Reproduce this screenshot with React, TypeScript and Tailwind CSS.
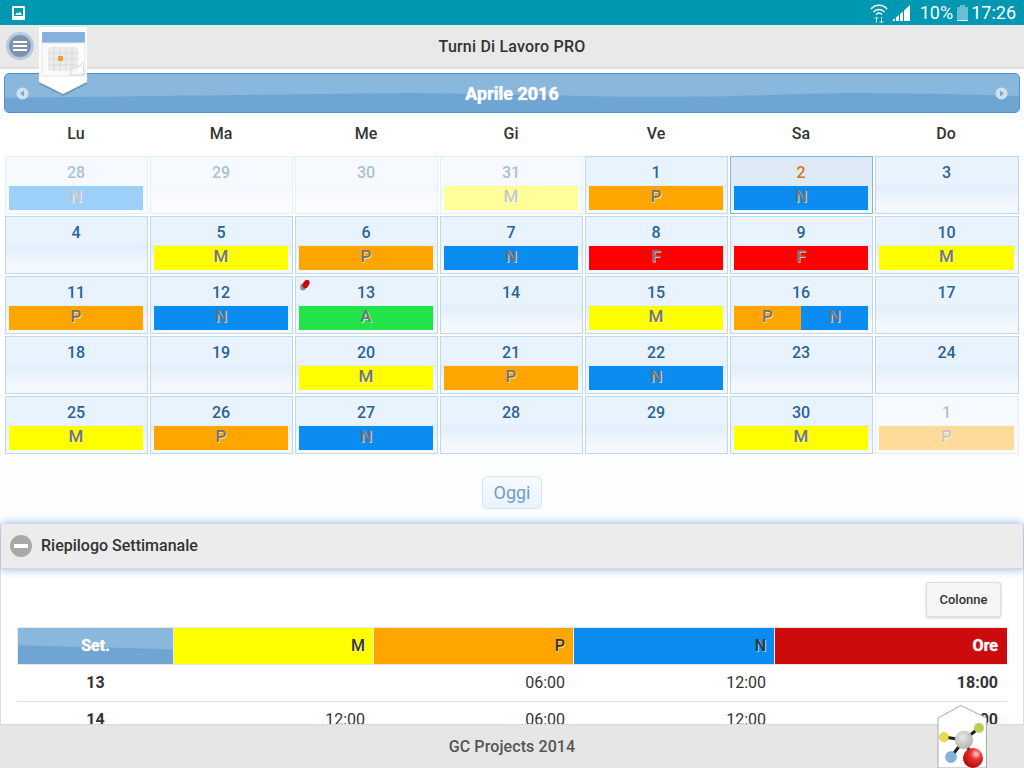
import { Fragment } from 'react';

type Day = { n: number; s?: string; off?: boolean; today?: boolean; pin?: boolean };

const shiftColor: Record<string, string> = {
  M: 'bg-[#ffff00]',
  P: 'bg-[#ffa500]',
  N: 'bg-[#0a8cf0]',
  F: 'bg-[#ff0000]',
  A: 'bg-[#22e34a]',
};

const weekdays = ['Lu', 'Ma', 'Me', 'Gi', 'Ve', 'Sa', 'Do'];

const days: Day[] = [
  { n: 28, s: 'N', off: true },
  { n: 29, off: true },
  { n: 30, off: true },
  { n: 31, s: 'M', off: true },
  { n: 1, s: 'P' },
  { n: 2, s: 'N', today: true },
  { n: 3 },
  { n: 4 },
  { n: 5, s: 'M' },
  { n: 6, s: 'P' },
  { n: 7, s: 'N' },
  { n: 8, s: 'F' },
  { n: 9, s: 'F' },
  { n: 10, s: 'M' },
  { n: 11, s: 'P' },
  { n: 12, s: 'N' },
  { n: 13, s: 'A', pin: true },
  { n: 14 },
  { n: 15, s: 'M' },
  { n: 16, s: 'PN' },
  { n: 17 },
  { n: 18 },
  { n: 19 },
  { n: 20, s: 'M' },
  { n: 21, s: 'P' },
  { n: 22, s: 'N' },
  { n: 23 },
  { n: 24 },
  { n: 25, s: 'M' },
  { n: 26, s: 'P' },
  { n: 27, s: 'N' },
  { n: 28 },
  { n: 29 },
  { n: 30, s: 'M' },
  { n: 1, s: 'P', off: true },
];

const rows = [
  ['13', '', '06:00', '12:00', '18:00'],
  ['14', '12:00', '06:00', '12:00', '30:00'],
];

const ShiftBlock = ({ label }: { label: string }) => (
  <div
    className={`flex flex-1 items-center justify-center pb-[5px] text-[17px] leading-[20px] font-medium text-[#727272] [text-shadow:1px_1px_0_rgba(255,255,255,0.7)] ${shiftColor[label]}`}
  >
    {label}
  </div>
);

const Wave = ({ d }: { d: string }) => (
  <svg
    className="absolute inset-0 h-full w-full"
    viewBox="0 0 1000 40"
    preserveAspectRatio="none"
  >
    <path d={d} fill="#6fa5d3" />
  </svg>
);

const CalendarBadge = () => (
  <svg
    className="absolute top-[27px] left-[38px]"
    width="50"
    height="70"
    viewBox="0 0 50 70"
  >
    <path d="M1 0 H49 V56 L25 68 L1 56 Z" fill="#000" opacity="0.18" transform="translate(0 1)" />
    <path d="M1 0 H49 V55 L25 67 L1 55 Z" fill="#fff" />
    <rect x="4" y="5" width="43" height="11" rx="1" fill="#84b2dd" />
    <rect x="4" y="16" width="43" height="33" fill="#fbfbfb" stroke="#e6e6e6" />
    <rect x="10" y="20" width="30" height="24" rx="3" fill="#ececec" />
    <path
      d="M16 20 V44 M22 20 V44 M28 20 V44 M34 20 V44 M10 26 H40 M10 32 H40 M10 38 H40"
      stroke="#d2d2d2"
      strokeWidth="0.7"
    />
    <rect x="20" y="29" width="5" height="5" fill="#f0a030" />
    <path d="M32 48 L33 41 C38 42 42 39 45 35 L46 48 Z" fill="#f2f2f2" stroke="#cfcfcf" strokeWidth="0.7" />
    <path d="M33 47 C37 45 42 42 45 36 L45 47 Z" fill="#fff" />
  </svg>
);

const MoleculeBadge = () => (
  <svg
    className="absolute top-[705px] left-[937px]"
    width="51"
    height="63"
    viewBox="0 0 51 63"
  >
    <defs>
      <radialGradient id="red" cx="0.65" cy="0.3" r="0.8">
        <stop offset="0" stopColor="#ffd0d0" />
        <stop offset="0.35" stopColor="#e83030" />
        <stop offset="1" stopColor="#b00000" />
      </radialGradient>
      <radialGradient id="gray" cx="0.4" cy="0.35" r="0.8">
        <stop offset="0" stopColor="#e8e8e8" />
        <stop offset="1" stopColor="#a8a8a8" />
      </radialGradient>
    </defs>
    <path d="M24 0.5 L49.5 13 V63 H1 V13 Z" fill="#fff" stroke="#a8a8a8" />
    <path
      d="M27 35 L7 32 M27 35 L42 23 M27 35 L14 52 M27 35 L36 53"
      stroke="#222"
      strokeWidth="3"
    />
    <circle cx="7" cy="32" r="4.5" fill="#f0dc3c" stroke="#c0b030" strokeWidth="0.5" />
    <circle cx="42" cy="23" r="5" fill="#b4d050" />
    <circle cx="14" cy="52" r="5.5" fill="#80b4e0" stroke="#5a90c0" strokeWidth="0.5" />
    <circle cx="27" cy="35" r="9" fill="url(#gray)" stroke="#e0b8a0" strokeWidth="0.5" />
    <circle cx="36" cy="53" r="10" fill="url(#red)" />
  </svg>
);

const StatusIcons = () => (
  <div className="flex items-center text-[18px] text-white">
    <svg width="18" height="20" viewBox="0 0 18 20" fill="none" stroke="#fff">
      <path d="M1 6 C5 1 13 1 17 6" strokeWidth="1.5" />
      <path d="M3.5 9 C6.5 5.5 11.5 5.5 14.5 9" strokeWidth="1.5" />
      <path d="M6 11.5 C8 9.5 10 9.5 12 11.5" strokeWidth="1.5" />
      <path d="M6.5 20 V14 M4.5 16 L6.5 14 L8.5 16 M11.5 14 V20 M9.5 18 L11.5 20 L13.5 18" strokeWidth="1" opacity="0.75" />
    </svg>
    <svg className="ml-[4px]" width="18" height="16" viewBox="0 0 18 16" fill="#fff">
      <path d="M0 16 H3 V13 L0 16 Z M4 16 H7 V10 L4 12.5 Z M8 16 H11 V6.5 L8 9 Z M12 16 H18 V0 L12 5.5 Z" />
    </svg>
    <span className="ml-[10px] leading-none">10%</span>
    <svg className="ml-[4px]" width="11" height="16" viewBox="0 0 11 16">
      <path d="M3 0 H8 V2 H11 V16 H0 V2 H3 Z" fill="#fff" opacity="0.4" />
      <rect y="15" width="11" height="1" fill="#fff" />
    </svg>
    <span className="ml-[3px] leading-none">17:26</span>
  </div>
);

const DayCell = ({ day }: { day: Day }) => {
  const labels = day.s ? day.s.split('') : [];
  return (
    <div
      className={`relative flex h-[58px] flex-col border pr-[4px] pl-[3px] ${
        day.today
          ? 'border-[#7db5e6] bg-gradient-to-b from-[#deebf7] from-50% to-[#f0f6fc]'
          : 'border-[#c0d8ec] bg-[linear-gradient(#e9f3fd_49%,#e1eefa_50%,#f3f8fe_85%)]'
      } ${day.off ? 'opacity-40' : ''}`}
    >
      {day.pin && (
        <svg className="absolute top-[2px] left-[3px]" width="12" height="14" viewBox="0 0 12 14">
          <ellipse cx="4" cy="8" rx="3" ry="3.5" fill="#555" opacity="0.6" />
          <ellipse cx="7" cy="5" rx="3" ry="4.5" transform="rotate(30 7 5)" fill="#c80808" />
        </svg>
      )}
      <div
        className={`h-[29px] pt-[5px] text-center text-[16px] leading-[22px] font-medium ${
          day.today ? 'text-[#e0700f]' : 'text-[#2a6496]'
        }`}
      >
        {day.n}
      </div>
      {labels.length > 0 && (
        <div className="flex h-[24px]">
          {labels.map((label) => (
            <ShiftBlock key={label} label={label} />
          ))}
        </div>
      )}
    </div>
  );
};

const App = () => {
  return (
    <div className="relative flex h-[768px] w-[1024px] flex-col overflow-hidden bg-white font-['Roboto',sans-serif]">
      {/* Status bar */}
      <div className="flex h-[25px] shrink-0 items-center justify-between bg-[#0097b2] pr-[8px] pl-[12px]">
        <svg width="13" height="14" viewBox="0 0 13 14">
          <path d="M1 0 H12 a1 1 0 0 1 1 1 V13 a1 1 0 0 1 -1 1 H1 a1 1 0 0 1 -1 -1 V1 a1 1 0 0 1 1 -1 Z M2 2 V10 H11 V2 Z" fill="#fff" fillRule="evenodd" />
          <path d="M3 9 L5 6.5 L6.5 7.5 L8 5.5 L10 9 Z" fill="#fff" />
        </svg>
        <StatusIcons />
      </div>

      {/* App header */}
      <div className="relative flex h-[44px] shrink-0 items-center justify-center border-b-2 border-[#dedede] bg-[#e9e9e9] pt-[2px] text-[16px] font-medium tracking-[0.2px] text-[#333]">
        <div className="absolute top-[7px] left-[6px] flex h-[28px] w-[28px] flex-col items-center justify-center gap-[2px] rounded-full border-[3px] border-[#b4cbe6] bg-[#7f93ab]">
          <span className="h-[2px] w-[14px] bg-white" />
          <span className="h-[2px] w-[14px] bg-white" />
          <span className="h-[2px] w-[14px] bg-white" />
        </div>
        Turni Di Lavoro PRO
      </div>

      <main className="min-h-0 flex-1 overflow-hidden">
        {/* Month bar */}
        <div className="relative mx-[4px] mt-[4px] flex h-[40px] items-center justify-between overflow-hidden rounded-[5px] border border-[#4c93d0] bg-[#8ab8dc] px-[11px]">
          <Wave d="M0 25 C100 24 300 21 400 20 C500 21 580 24 640 24 C720 24 780 21 824 20 C900 20 960 22 1000 23 L1000 40 L0 40 Z" />
          <svg className="relative" width="13" height="13" viewBox="0 0 13 13">
            <circle cx="6.5" cy="6.5" r="6" fill="#cfe0f1" />
            <path d="M8 3.5 V9.5 L4 6.5 Z" fill="#7fa5c9" />
          </svg>
          <span className="relative text-[18px] font-bold text-white [text-shadow:0_0_1px_#fff]">Aprile 2016</span>
          <svg className="relative" width="13" height="13" viewBox="0 0 13 13">
            <circle cx="6.5" cy="6.5" r="6" fill="#cfe0f1" />
            <path d="M5 3.5 V9.5 L9 6.5 Z" fill="#7fa5c9" />
          </svg>
        </div>

        {/* Weekdays */}
        <div className="mt-[9px] grid h-[24px] grid-cols-[repeat(7,142px)] gap-x-[3px] px-[5px] text-center text-[16px] leading-[24px] font-medium text-[#333]">
          {weekdays.map((w) => (
            <div key={w}>{w}</div>
          ))}
        </div>

        {/* Calendar grid */}
        <div className="mt-[10px] grid grid-cols-[repeat(6,143px)_144px] gap-[2px] px-[5px]">
          {days.map((day, i) => (
            <DayCell key={i} day={day} />
          ))}
        </div>

        {/* Today button */}
        <div className="flex h-[70px] items-center justify-center bg-[#fcfefe] pt-[7px]">
          <div className="flex h-[33px] w-[60px] items-center justify-center rounded-[5px] border border-[#d3e4f2] bg-gradient-to-b from-[#f6faff] to-[#e8f3fd] text-[18px] text-[#6f9dc4]">
            Oggi
          </div>
        </div>

        {/* Weekly summary */}
        <div className="border-x border-[#ddd]">
          <div className="flex h-[45px] items-center rounded-t-[4px] border-b border-[#d8d8d8] bg-[#ececec] pl-[9px] text-[16px] font-medium text-[#333] shadow-[0_0_10px_#7fb0dc]">
            <span className="mr-[9px] flex h-[22px] w-[22px] items-center justify-center rounded-full bg-[#a8a8a8]">
              <span className="h-[4px] w-[14px] bg-white" />
            </span>
            Riepilogo Settimanale
          </div>
          <div className="px-[16px] pt-[13px]">
            <div className="flex justify-end pr-[6px]">
              <div className="flex h-[35px] w-[75px] items-center justify-center rounded-[3px] border border-[#ddd] bg-[#f5f5f5] text-[13px] font-medium text-[#333] shadow-[0_1px_3px_rgba(0,0,0,0.2)]">
                Colonne
              </div>
            </div>
            <div className="mt-[10px] grid grid-cols-[157px_199px_200px_201px_233px] text-[16px] text-[#333]">
              <div className="relative flex h-[38px] items-center justify-center overflow-hidden border border-[#e8e8e8] bg-[#8ab8dc] font-bold text-white">
                <Wave d="M0 19 C300 21 700 22 1000 24 L1000 40 L0 40 Z" />
                <span className="relative [text-shadow:0_0_1px_#fff]">Set.</span>
              </div>
              <div className="flex h-[38px] items-center justify-end border-y border-[#e8e8e8] bg-[#ffff00] pr-[8px] font-medium [text-shadow:1px_1px_0_rgba(255,255,255,0.6)]">M</div>
              <div className="flex h-[38px] items-center justify-end border-y border-l border-[#e8e8e8] bg-[#ffa500] pr-[8px] font-medium [text-shadow:1px_1px_0_rgba(255,255,255,0.6)]">P</div>
              <div className="flex h-[38px] items-center justify-end border-y border-l border-[#e8e8e8] bg-[#0a8cf0] pr-[8px] font-medium [text-shadow:1px_1px_0_rgba(255,255,255,0.6)]">N</div>
              <div className="flex h-[38px] items-center justify-end border-y border-l border-[#e8e8e8] bg-[#cc0c0c] pr-[9px] font-bold text-white [text-shadow:0_0_1px_#fff]">Ore</div>
              {rows.map((row) => (
                <Fragment key={row[0]}>
                  <div className="flex h-[37px] items-center justify-center border-b border-[#e2e2e2] font-bold">{row[0]}</div>
                  <div className="flex h-[37px] items-center justify-end border-b border-[#e2e2e2] pr-[8px]">{row[1]}</div>
                  <div className="flex h-[37px] items-center justify-end border-b border-[#e2e2e2] pr-[8px]">{row[2]}</div>
                  <div className="flex h-[37px] items-center justify-end border-b border-[#e2e2e2] pr-[8px]">{row[3]}</div>
                  <div className="flex h-[37px] items-center justify-end border-b border-[#e2e2e2] pr-[9px] font-bold">{row[4]}</div>
                </Fragment>
              ))}
            </div>
          </div>
        </div>
      </main>

      {/* Footer */}
      <div className="flex h-[44px] shrink-0 items-center justify-center border-t border-[#d8d8d8] bg-[#e6e6e6] text-[16px] font-medium tracking-[0.1px] text-[#555]">
        GC Projects 2014
      </div>

      <CalendarBadge />
      <MoleculeBadge />
    </div>
  );
};

export default App;
